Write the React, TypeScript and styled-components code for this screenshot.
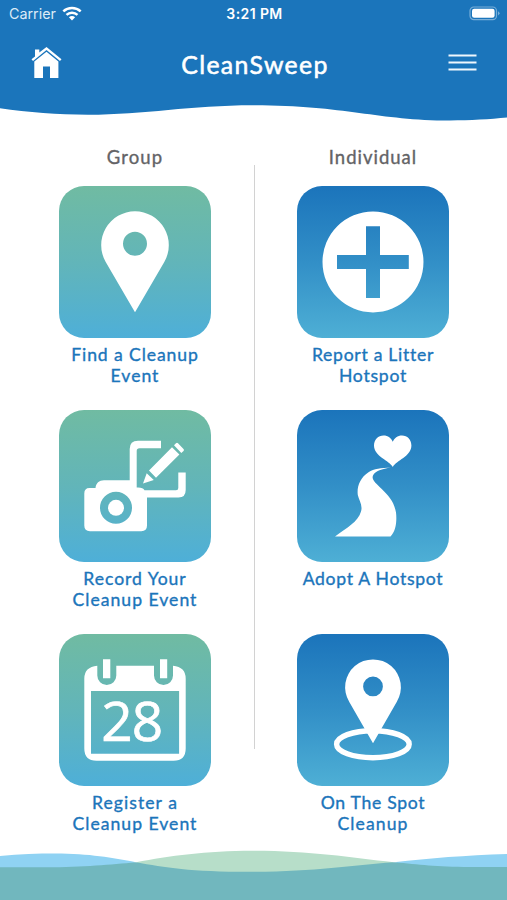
import React from "react";
import styled, { createGlobalStyle } from "styled-components";

const GlobalStyle = createGlobalStyle`
  * { box-sizing: border-box; }
  body { margin: 0; background: #fff; font-family: Lato, "Open Sans", sans-serif; }
`;

const Screen = styled.div`
  width: 507px;
  height: 900px;
  display: flex;
  flex-direction: column;
  background: #fff;
  overflow: hidden;
`;

const Header = styled.header`
  flex: none;
  background: #1b75bb;
  height: 104px;
  color: #fff;
`;

const StatusBar = styled.div`
  height: 27px;
  padding: 0 7px 0 9px;
  display: grid;
  grid-template-columns: 1fr auto 1fr;
  align-items: center;
  font-family: Inter, sans-serif;
`;

const Carrier = styled.div`
  display: flex;
  align-items: center;
  gap: 6px;
  font-size: 14.3px;
  color: #dcebf7;
`;

const Clock = styled.div`
  font-size: 14px;
  font-weight: 600;
  letter-spacing: 0.4px;
`;

const BatteryIcon = styled.svg`
  justify-self: end;
  display: block;
`;

const NavBar = styled.div`
  height: 72px;
  padding: 0 30px;
  display: grid;
  grid-template-columns: 32px 1fr 29px;
  align-items: center;
`;

const Title = styled.h1`
  margin: 3px 0 0;
  text-align: center;
  font-size: 24.8px;
  font-weight: 400;
  line-height: 30px;
  letter-spacing: 1.35px;
  -webkit-text-stroke: 0.55px currentColor;
`;

const NavButton = styled.button`
  padding: 0;
  border: 0;
  background: none;
  line-height: 0;
`;

const WaveEdge = styled.svg`
  flex: none;
  display: block;
`;

const Board = styled.main`
  flex: 1;
  min-height: 0;
  display: grid;
  grid-template-columns: 238px 1px 236px;
  padding: 22px 0 0 16px;
`;

const Column = styled.section`
  display: flex;
  flex-direction: column;
  align-items: center;
`;

const Divider = styled.div`
  margin-top: 19px;
  height: 584px;
  background: #d2d2d2;
`;

const ColumnTitle = styled.h2<{ $spacing: number }>`
  margin: 0 0 17px;
  font-size: 18.5px;
  line-height: 23px;
  font-weight: 400;
  color: #636366;
  letter-spacing: ${(p) => p.$spacing}px;
  -webkit-text-stroke: 0.35px currentColor;
`;

const Card = styled.a`
  display: flex;
  flex-direction: column;
  align-items: center;
  height: 224px;
`;

const Tile = styled.div<{ $tone: "green" | "blue" }>`
  width: 152px;
  height: 152px;
  border-radius: 25px;
  background: ${(p) =>
    p.$tone === "green"
      ? "linear-gradient(#70bba2, #62b5b9 50%, #4eafd8)"
      : "linear-gradient(#1b74bb, #328fc7 50%, #4eafd5)"};
  color: #fff;
  svg { display: block; }
`;

const Label = styled.div`
  margin-top: 7px;
  color: #1b75bb;
  font-size: 17.6px;
  line-height: 20.7px;
  -webkit-text-stroke: 0.35px currentColor;
`;

const Line = styled.div<{ $spacing: number }>`
  text-align: center;
  white-space: nowrap;
  letter-spacing: ${(p) => p.$spacing}px;
`;

const PinIcon = () => (
  <svg width="152" height="152" viewBox="0 0 152 152" fill="currentColor">
    <path fillRule="evenodd" d="M76 126.3 46.7 76A33.8 33.8 0 1 1 105.3 76ZM76 45.8a12 12 0 1 0 0 24 12 12 0 0 0 0-24Z" />
  </svg>
);

const PlusIcon = () => (
  <svg width="152" height="152" viewBox="0 0 152 152" fill="currentColor">
    <path fillRule="evenodd" d="M76 25.4a50.5 50.5 0 1 0 0 101 50.5 50.5 0 0 0 0-101ZM69 40.2H83V69H111.8V83H83V111.9H69V83H40V69H69Z" />
  </svg>
);

const CameraIcon = () => (
  <svg width="152" height="152" viewBox="0 0 152 152" fill="currentColor">
    <path fillRule="evenodd" d="M30.5 78H36.5C37 73 40 70.2 45 70.2H70.7V39Q70.7 30.8 79 30.8H102V38.3H80.5Q77.7 38.3 77.7 41V77.6Q84 77.2 85.5 80.2H117Q119.3 80.2 119.3 78V62.5H126.7V80Q126.7 87.5 119.5 87.5H88V115.5Q88 121.2 82.3 121.2H31Q25.3 121.2 25.3 115.5V83.5Q25.3 78 30.5 78ZM57 81.8a16 16 0 1 0 0 32 16 16 0 0 0 0-32Z" />
    <circle cx="57" cy="97.8" r="8" />
    <path d="M84 73.5 87.7 63.3 94.8 70ZM90 60.5 113 37.2 120.4 44.5 97 67.8ZM115 35.2 117 33.2Q118 32.2 119 33.2L124.5 39Q125.5 40 124.5 41L122.3 43Z" />
  </svg>
);

const TrailIcon = () => (
  <svg width="152" height="152" viewBox="0 0 152 152" fill="currentColor">
    <path d="M95.8 57C92.5 50.5 77 46.5 77 35.5C77 29.5 81.3 25.4 86.5 25.4C91 25.4 94.3 28 95.8 31.8C97.3 28 100.6 25.4 105 25.4C110.3 25.4 114.4 29.5 114.4 35.5C114.4 46.5 99 50.5 95.8 57Z" />
    <path d="M94 57.6C84 58 77 59 71.5 62.2C63 67.5 59.7 77 60.8 85C61.8 90 66 95 64 101.5C61 112 50 117.5 38 126.6H93.5C99 121 100 111 99 102.5C97 91 91 85.5 84.5 78.8C78.5 73 74.3 69.5 76 65.5C78.3 60.8 85 59 94 57.6Z" />
  </svg>
);

const DayNumber = styled.text`
  font-family: "Open Sans", "Noto Sans", sans-serif;
  font-size: 55px;
  font-weight: 400;
  stroke: currentColor;
  stroke-width: 0.7px;
`;

const CalendarIcon = () => (
  <svg width="152" height="152" viewBox="0 0 152 152" fill="currentColor">
    <path fillRule="evenodd" d="M38.3 31.7V41.5A9.5 9.5 0 0 0 57.3 41.5V31.7H95V41.5A9.5 9.5 0 0 0 114 41.5V31.7Q126.7 33 126.7 44.5V114.5Q126.7 126.7 114.5 126.7H37.5Q25.3 126.7 25.3 114.5V44.5Q25.3 33 38.3 31.7ZM32 57V119.7H120.1V57Z" />
    <path d="M44 25.3h7.3v19H44ZM101 25.3h7.2v19H101Z" />
    <DayNumber x="42.2" y="107.2" textLength="62">28</DayNumber>
  </svg>
);

const SpotIcon = () => (
  <svg width="152" height="152" viewBox="0 0 152 152" fill="currentColor">
    <path fillRule="evenodd" d="M76 109.3 52.3 68A27.9 27.9 0 1 1 99.7 68ZM76 42.5a9.9 9.9 0 1 0 0 19.8 9.9 9.9 0 0 0 0-19.8Z" />
    <ellipse cx="75.9" cy="110.2" rx="36.3" ry="13.5" fill="none" stroke="currentColor" strokeWidth="5.4" />
  </svg>
);

type TextLine = { text: string; spacing: number };
type CardItem = { icon: React.ReactNode; lines: TextLine[] };

const groupCards: CardItem[] = [
  { icon: <PinIcon />, lines: [{ text: "Find a Cleanup", spacing: 0.9 }, { text: "Event", spacing: 1 }] },
  { icon: <CameraIcon />, lines: [{ text: "Record Your", spacing: 0.95 }, { text: "Cleanup Event", spacing: 1 }] },
  { icon: <CalendarIcon />, lines: [{ text: "Register a", spacing: 1.05 }, { text: "Cleanup Event", spacing: 1 }] },
];

const individualCards: CardItem[] = [
  { icon: <PlusIcon />, lines: [{ text: "Report a Litter", spacing: 0.7 }, { text: "Hotspot", spacing: 0.75 }] },
  { icon: <TrailIcon />, lines: [{ text: "Adopt A Hotspot", spacing: 0.7 }] },
  { icon: <SpotIcon />, lines: [{ text: "On The Spot", spacing: 0.7 }, { text: "Cleanup", spacing: 1.1 }] },
];

const CardColumn = ({ title, spacing, tone, cards }: { title: string; spacing: number; tone: "green" | "blue"; cards: CardItem[] }) => (
  <Column>
    <ColumnTitle $spacing={spacing}>{title}</ColumnTitle>
    {cards.map((card, i) => (
      <Card key={i}>
        <Tile $tone={tone}>{card.icon}</Tile>
        <Label>
          {card.lines.map((line) => (
            <Line key={line.text} $spacing={line.spacing}>{line.text}</Line>
          ))}
        </Label>
      </Card>
    ))}
  </Column>
);

export default function App() {
  return (
    <Screen>
      <GlobalStyle />
      <Header>
        <StatusBar>
          <Carrier>
            Carrier
            <svg width="20" height="15" viewBox="0 0 20 15" fill="none" stroke="#fff" strokeWidth="2.5">
              <path d="M1.3 5.4C6.2.9 13.8.9 18.7 5.4M4.5 8.8c3.1-2.9 7.9-2.9 11 0" />
              <path d="M6.9 11.2c1.8-1.6 4.4-1.6 6.2 0L10 14.4Z" fill="#fff" stroke="none" />
            </svg>
          </Carrier>
          <Clock>3:21 PM</Clock>
          <BatteryIcon width="31" height="15" viewBox="0 0 31 15">
            <rect x="1" y="1" width="26.5" height="12.6" rx="3.8" fill="none" stroke="#78aed8" strokeWidth="1.2" />
            <rect x="3" y="2.8" width="22.6" height="9" rx="2.2" fill="#fff" />
            <path d="M29 5.2q3.2 2.1 0 4.2Z" fill="#78aed8" />
          </BatteryIcon>
        </StatusBar>
        <NavBar>
          <NavButton aria-label="Home">
            <svg width="32" height="32" viewBox="0 0 32 32" fill="#fff">
              <path d="M5 9.5V2.5H9.3V5.6L16.5 0 31.5 12.3 30 13.9 16.5 3 3 13.9 1.5 12.3Z" />
              <path d="M4.3 14.5 16.5 4.7 28.4 14.5V31H20V19.5H13V31H4.3Z" />
            </svg>
          </NavButton>
          <Title>CleanSweep</Title>
          <NavButton aria-label="Menu">
            <svg width="29" height="18" viewBox="0 0 29 18" stroke="#eff7fd" strokeWidth="2.2">
              <path d="M.5 1.5H28.5M.5 8.5H28.5M.5 15.5H28.5" />
            </svg>
          </NavButton>
        </NavBar>
      </Header>
      <WaveEdge width="507" height="20" viewBox="0 0 507 20">
        <path d="M0 0V4.3C28 8.5 58 10.7 88 10.7C145 10.7 190 1.2 253 1.2C345 1.2 378 16.5 450 16.5C470 16.5 490 15.3 507 13.6V0Z" fill="#1b75bb" />
      </WaveEdge>
      <Board>
        <CardColumn title="Group" spacing={1.1} tone="green" cards={groupCards} />
        <Divider />
        <CardColumn title="Individual" spacing={1} tone="blue" cards={individualCards} />
      </Board>
      <WaveEdge width="507" height="50" viewBox="0 0 507 50">
        <path d="M0 6C20 4 38 3.6 55 3.6C90 3.6 112 8 136 12.2L110 20H0ZM394 12.3C430 8 465 5.5 507 4V20H430Z" fill="#8fd2f3" />
        <path d="M136 12.2C170 6 205 .8 253 .8C310 .8 350 7.5 394 12.3L350 30H180Z" fill="#b7dec9" />
        <path d="M0 17.2H45C85 17.2 110 14.5 136 12.2C165 17.5 190 21.8 250 21.8C315 21.8 350 15.5 394 12.3C420 14.5 435 17 470 17H507V50H0Z" fill="#71b7be" />
      </WaveEdge>
    </Screen>
  );
}
